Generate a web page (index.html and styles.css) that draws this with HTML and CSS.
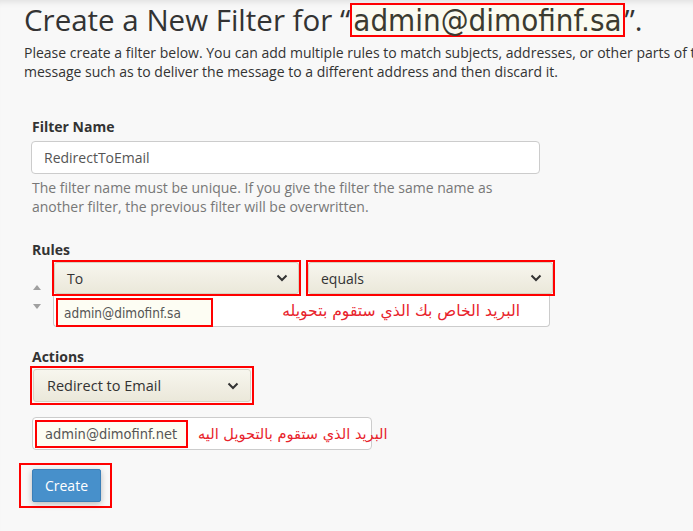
FILE: index.html
```html
<!DOCTYPE html>
<html lang="en">
<head>
<meta charset="utf-8">
<title>Create a New Filter</title>
<link rel="stylesheet" href="styles.css">
</head>
<body>
<div class="page">
  <h1 class="title">Create a New Filter for “<span class="title-email">admin@dimofinf.sa</span>”.</h1>
  <p class="intro">Please create a filter below. You can add multiple rules to match subjects, addresses, or other parts of the message such as to deliver the message to a different address and then discard it.</p>

  <div class="form">
    <div class="field">
      <div class="label">Filter Name</div>
      <div class="input name-input">RedirectToEmail</div>
      <div class="help">The filter name must be unique. If you give the filter the same name as another filter, the previous filter will be overwritten.</div>
    </div>

    <div class="label rules-label">Rules</div>
    <div class="rule">
      <div class="sorter">
        <span class="tri tri-up"></span>
        <span class="tri tri-down"></span>
      </div>
      <div class="rule-main">
        <div class="rule-selects">
          <div class="mark sel-mark">
            <div class="select"><span>To</span>
              <svg class="chev" width="12" height="8" viewBox="0 0 12 8"><path d="M1.5 1.5 L6 6 L10.5 1.5" fill="none" stroke="#333" stroke-width="2"/></svg>
            </div>
          </div>
          <div class="mark sel-mark">
            <div class="select"><span>equals</span>
              <svg class="chev" width="12" height="8" viewBox="0 0 12 8"><path d="M1.5 1.5 L6 6 L10.5 1.5" fill="none" stroke="#333" stroke-width="2"/></svg>
            </div>
          </div>
        </div>
        <div class="rule-value">
          <span class="mark email-mark email-sm">admin@dimofinf.sa</span>
          <span class="note note-rule" dir="rtl">البريد الخاص بك الذي ستقوم بتحويله</span>
        </div>
      </div>
    </div>

    <div class="label actions-label">Actions</div>
    <div class="mark action-mark">
      <div class="select action-select"><span>Redirect to Email</span>
        <svg class="chev" width="12" height="8" viewBox="0 0 12 8"><path d="M1.5 1.5 L6 6 L10.5 1.5" fill="none" stroke="#333" stroke-width="2"/></svg>
      </div>
    </div>
    <div class="action-value">
      <span class="mark email-mark email-md">admin@dimofinf.net</span>
      <span class="note note-action" dir="rtl">البريد الذي ستقوم بالتحويل اليه</span>
    </div>

    <div class="mark btn-mark">
      <button class="btn">Create</button>
    </div>
  </div>
</div>
</body>
</html>
```
FILE: styles.css
```css
html, body {
  margin: 0;
  padding: 0;
}
body {
  background: #f8f8f8;
  font-family: "Open Sans", "Noto Sans", sans-serif;
  font-size: 14px;
  color: #333;
  width: 693px;
  height: 531px;
  overflow: hidden;
}
.page {
  padding: 0 0 0 24px;
  height: 531px;
  box-shadow: inset 0 7px 6px -5px rgba(0,0,0,0.10);
}
.title {
  margin: 0;
  font-size: 29.5px;
  font-weight: 400;
  line-height: 40px;
  color: #333;
  white-space: nowrap;
}
.title-email {
  display: inline-block;
  font-family: "DejaVu Sans Condensed", "DejaVu Sans", sans-serif;
  font-stretch: condensed;
  font-size: 31px;
  line-height: 30px;
  color: #3b3b30;
  background: #fbfbf1;
  border: 2px solid #f00;
  padding: 0 1px;
}
.intro {
  margin: 3px 0 0;
  line-height: 19px;
  width: 720px;
}
.form {
  padding-left: 8px;
  margin-top: 36px;
}
.label {
  font-weight: 700;
  line-height: 20px;
  color: #333;
}
.input {
  box-sizing: border-box;
  background: #fff;
  border: 1px solid #ccc;
  border-radius: 4px;
  height: 33px;
  line-height: 31px;
  padding: 0 12px;
  color: #555;
}
.name-input {
  width: 509px;
  margin-top: 4px;
  margin-left: -1px;
}
.help {
  color: #777;
  line-height: 19px;
  margin-top: 4px;
  width: 480px;
}
.rules-label {
  margin-top: 24px;
}
.rule {
  display: flex;
}
.sorter {
  width: 20px;
  display: flex;
  flex-direction: column;
  padding-top: 25px;
  gap: 14px;
}
.tri {
  display: block;
  width: 0;
  height: 0;
  margin-left: 1px;
  border-left: 4px solid transparent;
  border-right: 4px solid transparent;
}
.tri-up { border-bottom: 5px solid #a0a0a0; }
.tri-down { border-top: 5px solid #a0a0a0; }
.rule-main {
  display: flex;
  flex-direction: column;
}
.rule-selects {
  display: flex;
  gap: 5px;
}
.mark {
  border: 2px solid #f00;
  box-sizing: border-box;
  flex-shrink: 0;
}
.sel-mark {
  width: 249px;
  height: 36px;
}
.select {
  box-sizing: border-box;
  height: 100%;
  border: 1px solid #d6d2c2;
  border-radius: 3px;
  background: linear-gradient(#f7f6ee, #ebe8da);
  display: flex;
  align-items: center;
  justify-content: space-between;
  padding: 0 10px 0 12px;
  color: #333;
}
.chev {
  display: block;
}
.rule-value {
  box-sizing: border-box;
  width: 497px;
  height: 31px;
  margin-left: 1px;
  border: 1px solid #ccc;
  border-top: none;
  border-radius: 0 0 4px 4px;
  background: #fff;
  display: flex;
  align-items: flex-start;
  padding: 2px 0 0 2px;
}
.email-mark {
  display: flex;
  align-items: center;
  background: #fdfdf3;
  font-family: "DejaVu Sans Condensed", "DejaVu Sans", sans-serif;
  font-stretch: condensed;
  color: #555;
  white-space: nowrap;
}
.email-sm {
  width: 157px;
  height: 29px;
  font-size: 13.5px;
  padding-left: 6px;
}
.note {
  font-family: "DejaVu Sans", sans-serif;
  color: #e8232b;
  white-space: nowrap;
}
.note-rule {
  font-size: 15.6px;
  margin-left: auto;
  padding-right: 29px;
  line-height: 26px;
}
.actions-label {
  margin-top: 21px;
  line-height: 18px;
}
.action-mark {
  width: 224px;
  height: 39px;
  margin-left: -2px;
  padding: 1px;
}
.action-select {
  padding: 0 11px 0 13px;
  font-size: 14.5px;
}
.action-value {
  box-sizing: border-box;
  width: 340px;
  height: 33px;
  margin-top: 12px;
  border: 1px solid #ccc;
  border-radius: 4px;
  background: #fff;
  display: flex;
  align-items: center;
  padding-left: 2px;
  gap: 10px;
}
.email-md {
  width: 153px;
  height: 28px;
  font-size: 14.5px;
  padding-left: 8px;
}
.note-action {
  font-size: 14.6px;
}
.btn-mark {
  width: 93px;
  height: 45px;
  margin-top: 13px;
  margin-left: -13px;
  padding: 4px 0 0 11px;
}
.btn {
  width: 69px;
  height: 33px;
  background: #4790cb;
  border: 1px solid #3b7fb8;
  border-radius: 2px;
  color: #fff;
  font-family: "Open Sans", sans-serif;
  font-size: 14px;
  padding: 0;
  box-shadow: 0 2px 6px rgba(0,0,0,0.25);
}
```
